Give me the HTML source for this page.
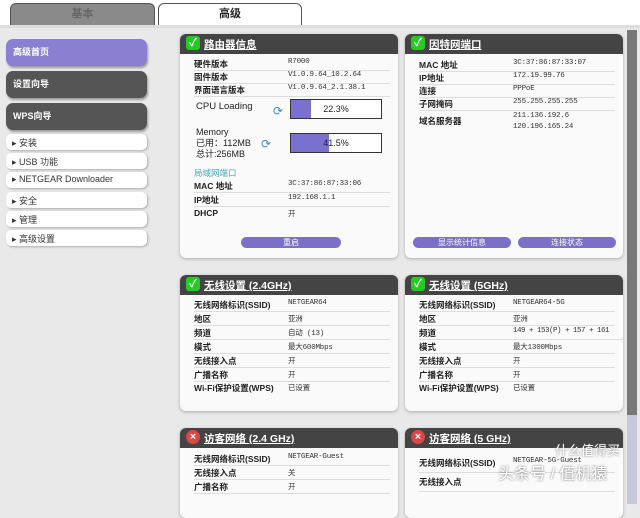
<!DOCTYPE html><html><head><meta charset="utf-8"><style>
*{margin:0;padding:0;box-sizing:border-box}
body{width:640px;height:504px;overflow:hidden;background:#e9e9e9;font-family:"Liberation Sans","Noto Sans CJK SC",sans-serif;position:relative;font-size:9px;color:#222}
.a{position:absolute}
.tab{top:3px;height:24px;border-radius:6px 6px 0 0;text-align:center;font-size:11px;line-height:20px;font-weight:bold;border:1px solid #555;border-bottom:none}
.nav{left:6px;width:141px;height:27px;border-radius:7px;color:#fff;font-size:9px;font-weight:bold;padding:6px 7px;box-shadow:1px 2px 2px #999}
.sub{left:6px;width:141px;height:16px;border-radius:5px;background:#fff;font-size:9px;padding:2px 6px;box-shadow:1px 1px 2px #aaa;color:#333}
.p{background:#fafafa;border-radius:6px;box-shadow:0 1px 3px #aaa;overflow:hidden}
.h{height:20px;background:#444;color:#fff;font-size:10.5px;font-weight:bold;padding:3px 0 0 24px;text-decoration:underline;position:relative}
.h:before{content:"✓";position:absolute;left:6px;top:2px;width:14px;height:14px;background:#2c2;border-radius:3px;color:#fff;font-size:11px;line-height:14px;text-align:center}
.h.x:before{content:"×";background:#d44;border-radius:7px}
.r{position:absolute;left:14px;right:8px;height:13px;border-bottom:1px solid #ddd;font-size:8.5px;font-weight:bold;white-space:nowrap}
.r span{position:absolute;left:94px;font-weight:normal;font-family:"Liberation Mono","Noto Sans CJK SC",monospace;font-size:7.5px;color:#333;white-space:nowrap;letter-spacing:-0.2px}
.btn{height:11px;border-radius:6px;background:#7a70c8;color:#fff;text-align:center;font-size:8px;line-height:11px}
.bar{border:1px solid #333;background:#fff;height:20px;width:92px;font-size:9px;text-align:center;line-height:18px}
.bar b{position:relative;font-weight:normal}
</style></head><body>
<div class="a" style="left:0;top:0;width:640px;height:27px;background:#fff"></div>
<div class="a tab" style="left:10px;width:145px;background:#8a8a8a;color:#666">基本</div>
<div class="a tab" style="left:158px;width:144px;background:#fff;color:#222">高级</div>
<div class="a" style="left:0;top:25px;width:640px;height:3px;background:#ddd"></div>
<div class="a nav" style="top:39px;background:#8a7fd0">高级首页</div>
<div class="a nav" style="top:71px;background:#555">设置向导</div>
<div class="a nav" style="top:103px;background:#555">WPS向导</div>
<div class="a sub" style="top:134px">▸ 安装</div>
<div class="a sub" style="top:153px">▸ USB 功能</div>
<div class="a sub" style="top:172px">▸ NETGEAR Downloader</div>
<div class="a sub" style="top:192px">▸ 安全</div>
<div class="a sub" style="top:211px">▸ 管理</div>
<div class="a sub" style="top:230px">▸ 高级设置</div>
<div class="a" style="left:627px;top:30px;width:10px;height:385px;background:#777"></div>
<div class="a" style="left:627px;top:415px;width:10px;height:89px;background:#c8c8dc"></div>

<div class="a p" style="left:180px;top:34px;width:218px;height:224px">
<div class="h">路由器信息</div>
<div class="r" style="top:24px">硬件版本<span>R7000</span></div>
<div class="r" style="top:37px">固件版本<span>V1.0.9.64_10.2.64</span></div>
<div class="r" style="top:50px">界面语言版本<span>V1.0.9.64_2.1.38.1</span></div>
<div class="a" style="left:16px;top:67px;font-size:9.5px">CPU Loading</div>
<div class="a" style="left:93px;top:70px;color:#48c;font-size:12px">⟳</div>
<div class="a bar" style="left:110px;top:65px"><div class="a" style="left:0;top:0;width:20px;height:18px;background:#7a70d0"></div><b>22.3%</b></div>
<div class="a" style="left:16px;top:93px;font-size:9px;line-height:11px">Memory<br>已用：112MB<br>总计:256MB</div>
<div class="a" style="left:81px;top:103px;color:#48c;font-size:12px">⟳</div>
<div class="a bar" style="left:110px;top:99px"><div class="a" style="left:0;top:0;width:38px;height:18px;background:#7a70d0"></div><b>41.5%</b></div>
<div class="a" style="left:14px;top:133px;color:#4ab;font-size:8.5px">局域网端口</div>
<div class="r" style="top:146px">MAC 地址<span>3C:37:86:87:33:06</span></div>
<div class="r" style="top:160px">IP地址<span>192.168.1.1</span></div>
<div class="r" style="top:174px;border:none">DHCP<span>开</span></div>
<div class="a btn" style="left:61px;top:203px;width:100px">重启</div>
</div>

<div class="a p" style="left:405px;top:34px;width:218px;height:224px">
<div class="h">因特网端口</div>
<div class="r" style="top:25px">MAC 地址<span>3C:37:86:87:33:07</span></div>
<div class="r" style="top:38px">IP地址<span>172.19.99.76</span></div>
<div class="r" style="top:51px">连接<span>PPPoE</span></div>
<div class="r" style="top:64px">子网掩码<span>255.255.255.255</span></div>
<div class="r" style="top:81px;border:none">域名服务器<span style="top:-4px;line-height:11px">211.136.192.6<br>120.196.165.24</span></div>
<div class="a btn" style="left:8px;top:203px;width:98px">显示统计信息</div>
<div class="a btn" style="left:113px;top:203px;width:98px">连接状态</div>
</div>

<div class="a p" style="left:180px;top:275px;width:218px;height:136px">
<div class="h">无线设置 (2.4GHz)</div>
<div class="r" style="top:24px">无线网络标识(SSID)<span>NETGEAR64</span></div>
<div class="r" style="top:38px">地区<span>亚洲</span></div>
<div class="r" style="top:52px">频道<span>自动 (13)</span></div>
<div class="r" style="top:66px">模式<span>最大600Mbps</span></div>
<div class="r" style="top:80px">无线接入点<span>开</span></div>
<div class="r" style="top:94px">广播名称<span>开</span></div>
<div class="r" style="top:107px;border:none">Wi-Fi保护设置(WPS)<span>已设置</span></div>
</div>

<div class="a p" style="left:405px;top:275px;width:218px;height:136px">
<div class="h">无线设置 (5GHz)</div>
<div class="r" style="top:24px">无线网络标识(SSID)<span>NETGEAR64-5G</span></div>
<div class="r" style="top:38px">地区<span>亚洲</span></div>
<div class="r" style="top:52px;right:0">频道<span style="letter-spacing:-0.5px">149 + 153(P) + 157 + 161</span></div>
<div class="r" style="top:66px">模式<span>最大1300Mbps</span></div>
<div class="r" style="top:80px">无线接入点<span>开</span></div>
<div class="r" style="top:94px">广播名称<span>开</span></div>
<div class="r" style="top:107px;border:none">Wi-Fi保护设置(WPS)<span>已设置</span></div>
</div>

<div class="a p" style="left:180px;top:428px;width:218px;height:90px">
<div class="h x">访客网络 (2.4 GHz)</div>
<div class="r" style="top:25px">无线网络标识(SSID)<span>NETGEAR-Guest</span></div>
<div class="r" style="top:39px">无线接入点<span>关</span></div>
<div class="r" style="top:53px">广播名称<span>开</span></div>
</div>
<div class="a p" style="left:405px;top:428px;width:218px;height:90px">
<div class="h x">访客网络 (5 GHz)</div>
<div class="r" style="top:29px;height:16px">无线网络标识(SSID)<span>NETGEAR-5G-Guest</span></div>
<div class="r" style="top:48px;height:16px">无线接入点</div>
</div>
<div class="a" style="left:498px;top:460px;color:#fff;font-size:16px;text-shadow:0 0 2px #666">头条号 / 值机猿</div>
<div class="a" style="left:555px;top:440px;color:#fff;font-size:13px;text-shadow:0 0 2px #666">什么值得买</div>
</body></html>
